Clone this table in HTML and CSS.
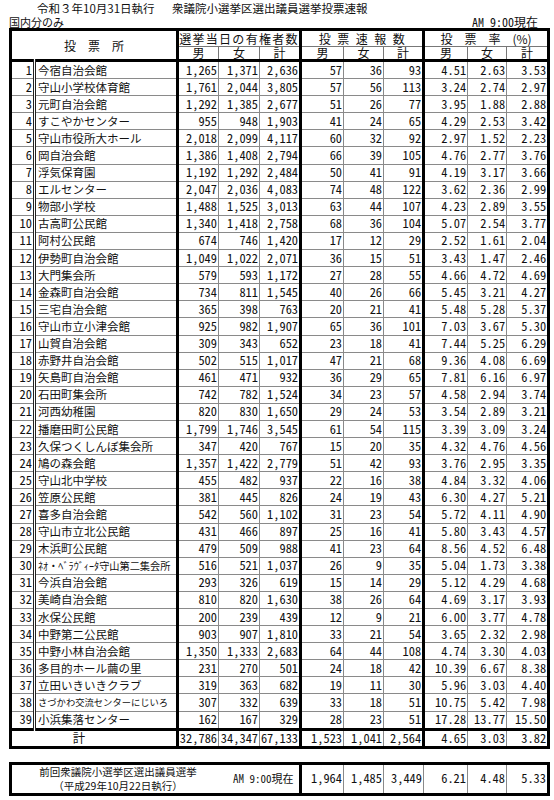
FILE: index.html
```html
<!DOCTYPE html>
<html lang="ja">
<head>
<meta charset="utf-8">
<title>衆議院小選挙区選出議員選挙投票速報</title>
<link rel="stylesheet" href="styles.css">
</head>
<body>
<div class="page">
  <div class="title"><span class="t1">令和３年10月31日執行</span><span class="t2">衆議院小選挙区選出議員選挙投票速報</span></div>
  <div class="sub"><span>国内分のみ</span><span class="asof"><span class="mono">AM 9:00</span>現在</span></div>
  <table class="main">
    <colgroup>
      <col class="c-no"><col class="c-name">
      <col class="c41"><col class="c41"><col class="c41">
      <col class="c43"><col class="c40"><col class="c40">
      <col class="c44"><col class="c39"><col class="c42">
    </colgroup>
    <thead>
      <tr class="h1">
        <th colspan="2" rowspan="2" class="g hplace">投票所</th>
        <th colspan="3" class="g hs1">選挙当日の有権者数</th>
        <th colspan="3" class="g hs2">投票速報数</th>
        <th colspan="3" class="hs3">投　票　率　(%)</th>
      </tr>
      <tr class="h2">
        <th>男</th><th>女</th><th class="g">計</th>
        <th>男</th><th>女</th><th class="g">計</th>
        <th>男</th><th>女</th><th>計</th>
      </tr>
    </thead>
    <tbody>
      <tr><td>1</td><td>今宿自治会館</td><td>1,265</td><td>1,371</td><td>2,636</td><td>57</td><td>36</td><td>93</td><td>4.51</td><td>2.63</td><td>3.53</td></tr>
      <tr><td>2</td><td>守山小学校体育館</td><td>1,761</td><td>2,044</td><td>3,805</td><td>57</td><td>56</td><td>113</td><td>3.24</td><td>2.74</td><td>2.97</td></tr>
      <tr><td>3</td><td>元町自治会館</td><td>1,292</td><td>1,385</td><td>2,677</td><td>51</td><td>26</td><td>77</td><td>3.95</td><td>1.88</td><td>2.88</td></tr>
      <tr><td>4</td><td>すこやかセンター</td><td>955</td><td>948</td><td>1,903</td><td>41</td><td>24</td><td>65</td><td>4.29</td><td>2.53</td><td>3.42</td></tr>
      <tr><td>5</td><td>守山市役所大ホール</td><td>2,018</td><td>2,099</td><td>4,117</td><td>60</td><td>32</td><td>92</td><td>2.97</td><td>1.52</td><td>2.23</td></tr>
      <tr><td>6</td><td>岡自治会館</td><td>1,386</td><td>1,408</td><td>2,794</td><td>66</td><td>39</td><td>105</td><td>4.76</td><td>2.77</td><td>3.76</td></tr>
      <tr><td>7</td><td>浮気保育園</td><td>1,192</td><td>1,292</td><td>2,484</td><td>50</td><td>41</td><td>91</td><td>4.19</td><td>3.17</td><td>3.66</td></tr>
      <tr><td>8</td><td>エルセンター</td><td>2,047</td><td>2,036</td><td>4,083</td><td>74</td><td>48</td><td>122</td><td>3.62</td><td>2.36</td><td>2.99</td></tr>
      <tr><td>9</td><td>物部小学校</td><td>1,488</td><td>1,525</td><td>3,013</td><td>63</td><td>44</td><td>107</td><td>4.23</td><td>2.89</td><td>3.55</td></tr>
      <tr><td>10</td><td>古高町公民館</td><td>1,340</td><td>1,418</td><td>2,758</td><td>68</td><td>36</td><td>104</td><td>5.07</td><td>2.54</td><td>3.77</td></tr>
      <tr><td>11</td><td>阿村公民館</td><td>674</td><td>746</td><td>1,420</td><td>17</td><td>12</td><td>29</td><td>2.52</td><td>1.61</td><td>2.04</td></tr>
      <tr><td>12</td><td>伊勢町自治会館</td><td>1,049</td><td>1,022</td><td>2,071</td><td>36</td><td>15</td><td>51</td><td>3.43</td><td>1.47</td><td>2.46</td></tr>
      <tr><td>13</td><td>大門集会所</td><td>579</td><td>593</td><td>1,172</td><td>27</td><td>28</td><td>55</td><td>4.66</td><td>4.72</td><td>4.69</td></tr>
      <tr><td>14</td><td>金森町自治会館</td><td>734</td><td>811</td><td>1,545</td><td>40</td><td>26</td><td>66</td><td>5.45</td><td>3.21</td><td>4.27</td></tr>
      <tr><td>15</td><td>三宅自治会館</td><td>365</td><td>398</td><td>763</td><td>20</td><td>21</td><td>41</td><td>5.48</td><td>5.28</td><td>5.37</td></tr>
      <tr><td>16</td><td>守山市立小津会館</td><td>925</td><td>982</td><td>1,907</td><td>65</td><td>36</td><td>101</td><td>7.03</td><td>3.67</td><td>5.30</td></tr>
      <tr><td>17</td><td>山賀自治会館</td><td>309</td><td>343</td><td>652</td><td>23</td><td>18</td><td>41</td><td>7.44</td><td>5.25</td><td>6.29</td></tr>
      <tr><td>18</td><td>赤野井自治会館</td><td>502</td><td>515</td><td>1,017</td><td>47</td><td>21</td><td>68</td><td>9.36</td><td>4.08</td><td>6.69</td></tr>
      <tr><td>19</td><td>矢島町自治会館</td><td>461</td><td>471</td><td>932</td><td>36</td><td>29</td><td>65</td><td>7.81</td><td>6.16</td><td>6.97</td></tr>
      <tr><td>20</td><td>石田町集会所</td><td>742</td><td>782</td><td>1,524</td><td>34</td><td>23</td><td>57</td><td>4.58</td><td>2.94</td><td>3.74</td></tr>
      <tr><td>21</td><td>河西幼稚園</td><td>820</td><td>830</td><td>1,650</td><td>29</td><td>24</td><td>53</td><td>3.54</td><td>2.89</td><td>3.21</td></tr>
      <tr><td>22</td><td>播磨田町公民館</td><td>1,799</td><td>1,746</td><td>3,545</td><td>61</td><td>54</td><td>115</td><td>3.39</td><td>3.09</td><td>3.24</td></tr>
      <tr><td>23</td><td>久保つくしんぼ集会所</td><td>347</td><td>420</td><td>767</td><td>15</td><td>20</td><td>35</td><td>4.32</td><td>4.76</td><td>4.56</td></tr>
      <tr><td>24</td><td>鳩の森会館</td><td>1,357</td><td>1,422</td><td>2,779</td><td>51</td><td>42</td><td>93</td><td>3.76</td><td>2.95</td><td>3.35</td></tr>
      <tr><td>25</td><td>守山北中学校</td><td>455</td><td>482</td><td>937</td><td>22</td><td>16</td><td>38</td><td>4.84</td><td>3.32</td><td>4.06</td></tr>
      <tr><td>26</td><td>笠原公民館</td><td>381</td><td>445</td><td>826</td><td>24</td><td>19</td><td>43</td><td>6.30</td><td>4.27</td><td>5.21</td></tr>
      <tr><td>27</td><td>喜多自治会館</td><td>542</td><td>560</td><td>1,102</td><td>31</td><td>23</td><td>54</td><td>5.72</td><td>4.11</td><td>4.90</td></tr>
      <tr><td>28</td><td>守山市立北公民館</td><td>431</td><td>466</td><td>897</td><td>25</td><td>16</td><td>41</td><td>5.80</td><td>3.43</td><td>4.57</td></tr>
      <tr><td>29</td><td>木浜町公民館</td><td>479</td><td>509</td><td>988</td><td>41</td><td>23</td><td>64</td><td>8.56</td><td>4.52</td><td>6.48</td></tr>
      <tr><td>30</td><td class="neo"><span class="hw">ﾈｵ・ﾍﾞﾗｳﾞｨｰﾀ</span>守山第二集会所</td><td>516</td><td>521</td><td>1,037</td><td>26</td><td>9</td><td>35</td><td>5.04</td><td>1.73</td><td>3.38</td></tr>
      <tr><td>31</td><td>今浜自治会館</td><td>293</td><td>326</td><td>619</td><td>15</td><td>14</td><td>29</td><td>5.12</td><td>4.29</td><td>4.68</td></tr>
      <tr><td>32</td><td>美崎自治会館</td><td>810</td><td>820</td><td>1,630</td><td>38</td><td>26</td><td>64</td><td>4.69</td><td>3.17</td><td>3.93</td></tr>
      <tr><td>33</td><td>水保公民館</td><td>200</td><td>239</td><td>439</td><td>12</td><td>9</td><td>21</td><td>6.00</td><td>3.77</td><td>4.78</td></tr>
      <tr><td>34</td><td>中野第二公民館</td><td>903</td><td>907</td><td>1,810</td><td>33</td><td>21</td><td>54</td><td>3.65</td><td>2.32</td><td>2.98</td></tr>
      <tr><td>35</td><td>中野小林自治会館</td><td>1,350</td><td>1,333</td><td>2,683</td><td>64</td><td>44</td><td>108</td><td>4.74</td><td>3.30</td><td>4.03</td></tr>
      <tr><td>36</td><td>多目的ホール繭の里</td><td>231</td><td>270</td><td>501</td><td>24</td><td>18</td><td>42</td><td>10.39</td><td>6.67</td><td>8.38</td></tr>
      <tr><td>37</td><td>立田いきいきクラブ</td><td>319</td><td>363</td><td>682</td><td>19</td><td>11</td><td>30</td><td>5.96</td><td>3.03</td><td>4.40</td></tr>
      <tr><td>38</td><td class="small">さづかわ交流センターにじいろ</td><td>307</td><td>332</td><td>639</td><td>33</td><td>18</td><td>51</td><td>10.75</td><td>5.42</td><td>7.98</td></tr>
      <tr><td>39</td><td>小浜集落センター</td><td>162</td><td>167</td><td>329</td><td>28</td><td>23</td><td>51</td><td>17.28</td><td>13.77</td><td>15.50</td></tr>
    </tbody>
    <tfoot>
      <tr>
        <td colspan="2" class="g tlabel">計</td>
        <td>32,786</td><td>34,347</td><td class="g">67,133</td>
        <td>1,523</td><td>1,041</td><td class="g">2,564</td>
        <td>4.65</td><td>3.03</td><td>3.82</td>
      </tr>
    </tfoot>
  </table>

  <table class="prev">
    <colgroup>
      <col class="c-plabel">
      <col class="c43"><col class="c40"><col class="c40">
      <col class="c44"><col class="c39"><col class="c42">
    </colgroup>
    <tbody>
      <tr>
        <td class="plabel g">
          <div class="plabel-in">
            <div class="ptext">前回衆議院小選挙区選出議員選挙<br>（平成29年10月22日執行）</div>
            <div class="pasof"><span class="mono">AM 9:00</span>現在</div>
          </div>
        </td>
        <td>1,964</td><td>1,485</td><td>3,449</td><td>6.21</td><td>4.48</td><td>5.33</td>
      </tr>
    </tbody>
  </table>
</div>
</body>
</html>
```

FILE: styles.css
```css
html, body {
  margin: 0;
  padding: 0;
  background: #ffffff;
}

body {
  color: #111;
  font-family: "Noto Sans CJK JP", "Noto Sans", sans-serif;
}

.page {
  width: 538px;
  padding: 0 7px 0 9px;
}

.mono {
  font-family: "Noto Sans Mono CJK JP", "DejaVu Sans Mono", monospace;
}

.title {
  display: flex;
  padding-top: 1px;
  padding-left: 28px;
  height: 15px;
  font-size: 11.5px;
  line-height: 15px;
}

.t1 {
  width: 135px;
}

.sub {
  display: flex;
  justify-content: space-between;
  align-items: flex-end;
  height: 12px;
  font-size: 11px;
  line-height: 12px;
  padding-right: 9px;
}

.asof {
  font-size: 12px;
}

/* ---------- main table ---------- */
table {
  border-collapse: collapse;
  table-layout: fixed;
  width: 538px;
}

.main {
  border: 3px solid #000;
}

.c-no { width: 24px; }
.c-name { width: 143px; }
.c41 { width: 41px; }
.c43 { width: 43px; }
.c40 { width: 40px; }
.c44 { width: 44px; }
.c39 { width: 39px; }
.c42 { width: 42px; }
.c-plabel { width: 290px; }

th {
  font-weight: normal;
  font-size: 12px;
  border: 1px solid #777;
  padding: 0;
  text-align: center;
}

.h1 th { height: 15px; line-height: 15px; vertical-align: top; }
.h2 th { height: 12px; line-height: 12px; vertical-align: bottom; border-bottom: 3px solid #000; }

.hplace {
  letter-spacing: 12px;
  text-indent: 12px;
  border-bottom: 3px solid #000;
  vertical-align: middle !important;
}
.hs1 { letter-spacing: 1.3px; }
.hs2 { letter-spacing: 6.5px; text-indent: 6px; }

.g { border-right: 3px solid #000 !important; }

td {
  border: 1px solid #8a8a8a;
  padding: 0 1px 0 0;
  height: 16.1px;
  line-height: 15px;
  font-family: "Noto Sans Mono CJK JP", "DejaVu Sans Mono", monospace;
  font-size: 12.4px;
  text-align: right;
  white-space: nowrap;
  overflow: hidden;
}

.main tbody td:nth-child(1) {
  border-right: 3px double #222;
  padding-right: 1px;
}

.main tbody td:nth-child(2) {
  font-family: "Noto Sans CJK JP", sans-serif;
  font-size: 11.5px;
  text-align: left;
  padding-left: 2px;
  border-right: 3px solid #000;
}

.main tbody td:nth-child(5),
.main tbody td:nth-child(8) {
  border-right: 3px solid #000;
}

.main tbody td.neo { font-size: 10.2px; }
.hw { font-family: "Noto Sans Mono CJK JP", sans-serif; font-size: 10.2px; }
.main tbody td.small { font-size: 9.3px; }

.main tfoot td {
  border-top: 3px solid #000;
  height: 14px;
}

.tlabel {
  font-family: "Noto Sans CJK JP", sans-serif;
  text-align: center !important;
  padding-right: 30px !important;
}

/* ---------- previous election box ---------- */
.prev {
  margin-top: 13px;
  border: 3px solid #000;
}

.prev td {
  height: 27px;
}

.plabel {
  text-align: left !important;
  font-family: "Noto Sans CJK JP", sans-serif;
}

.plabel-in {
  display: flex;
  align-items: center;
}

.ptext {
  width: 212px;
  text-align: center;
  font-size: 10.5px;
  line-height: 14px;
}

.pasof {
  font-size: 11px;
  padding-left: 9px;
}
```
